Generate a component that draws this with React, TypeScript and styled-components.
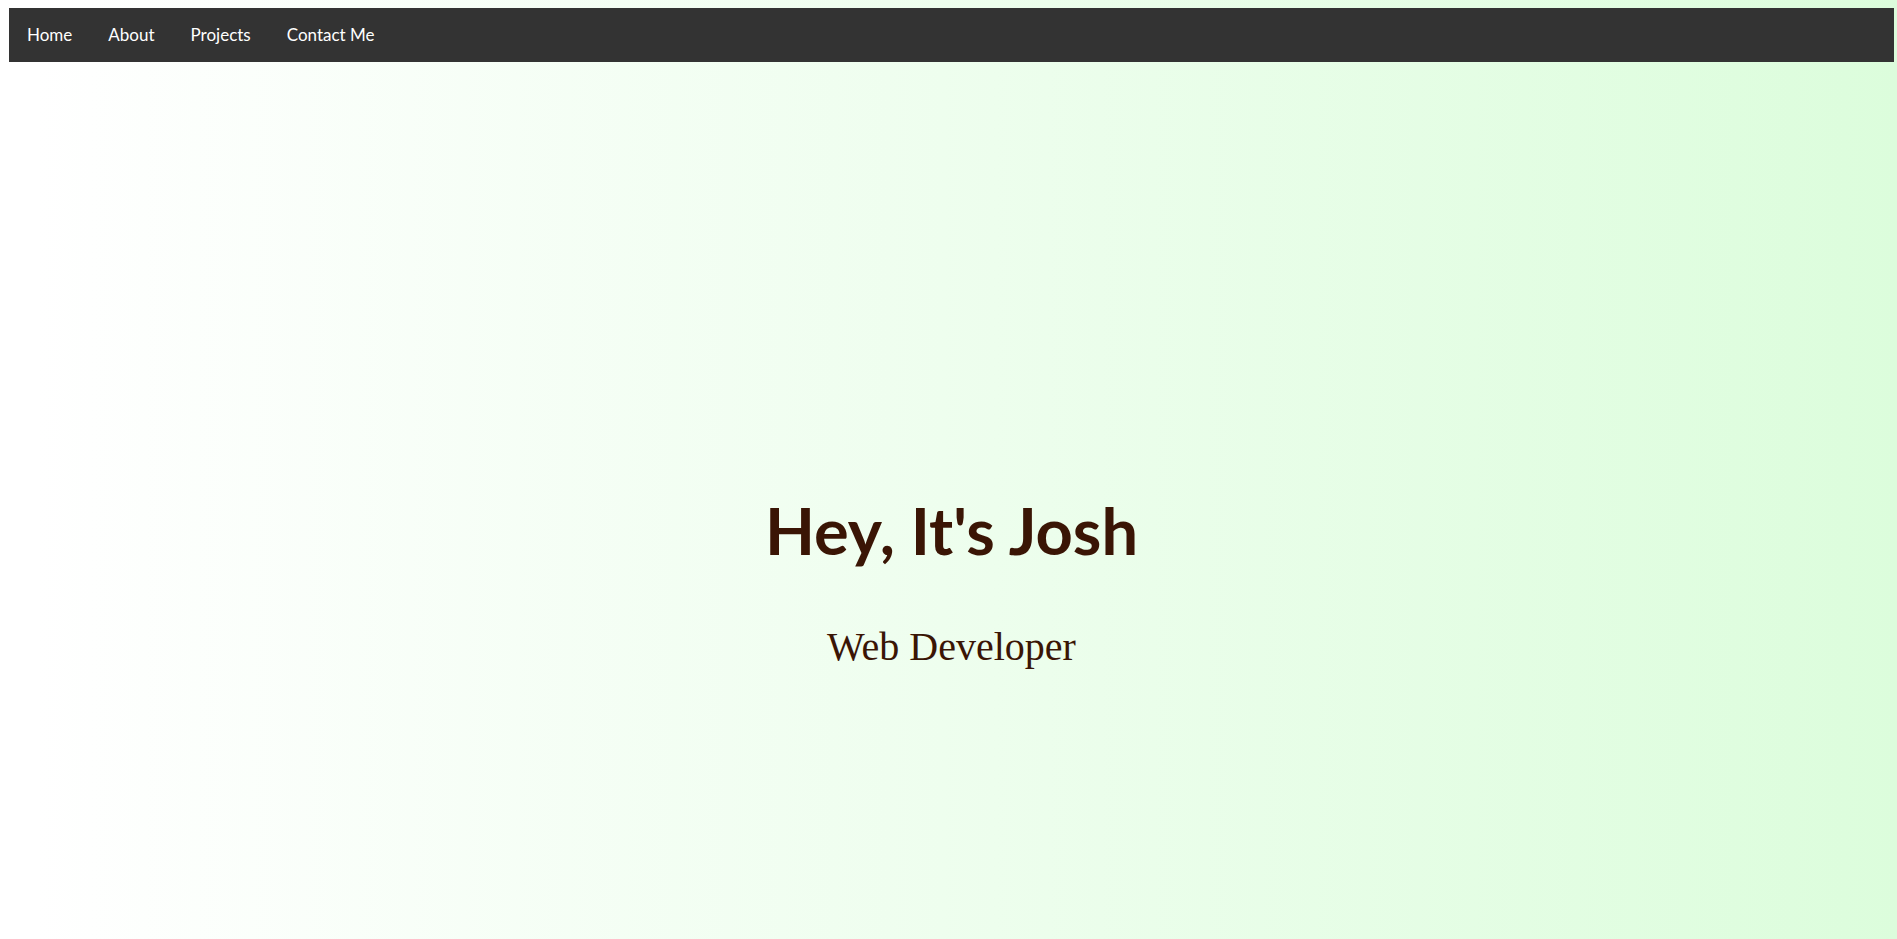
import React from "react";
import styled, { createGlobalStyle } from "styled-components";

const GlobalStyle = createGlobalStyle`
  html, body {
    margin: 0;
    padding: 0;
  }

  body {
    min-height: 100vh;
    background: linear-gradient(to right, #ffffff 2%, #dcfddc 100%);
    font-family: "Lato", "Open Sans", sans-serif;
    overflow: hidden;
  }
`;

const links = ["Home", "About", "Projects", "Contact Me"];

const App: React.FunctionComponent = () => {
  return (
    <>
      <GlobalStyle />
      <Page>
        <NavBar>
          {links.map((link) => (
            <NavLink key={link} href="#">
              {link}
            </NavLink>
          ))}
        </NavBar>
        <Hero>
          <Title>Hey, It's Josh</Title>
          <Subtitle>Web Developer</Subtitle>
        </Hero>
      </Page>
    </>
  );
};

const Page = styled.div`
  display: flex;
  flex-direction: column;
  height: 100vh;
  padding: 8px 3px 0 9px;
  box-sizing: border-box;
`;

const NavBar = styled.nav`
  display: flex;
  align-items: center;
  height: 54px;
  padding-bottom: 2px;
  box-sizing: border-box;
  background: #333333;
`;

const NavLink = styled.a`
  padding: 0 18px;
  color: #ffffff;
  font-size: 17px;
  text-decoration: none;
`;

const Hero = styled.section`
  flex: 1;
  display: flex;
  flex-direction: column;
  align-items: center;
  justify-content: center;
  padding-top: 160px;
  color: #3a1505;
`;

const Title = styled.h1`
  margin: 0;
  font-family: "Lato", "Open Sans", sans-serif;
  font-size: 65px;
  font-weight: 700;
`;

const Subtitle = styled.h2`
  margin: 54px 0 0;
  font-family: "Liberation Serif", serif;
  font-size: 40px;
  font-weight: 400;
`;

export default App;
